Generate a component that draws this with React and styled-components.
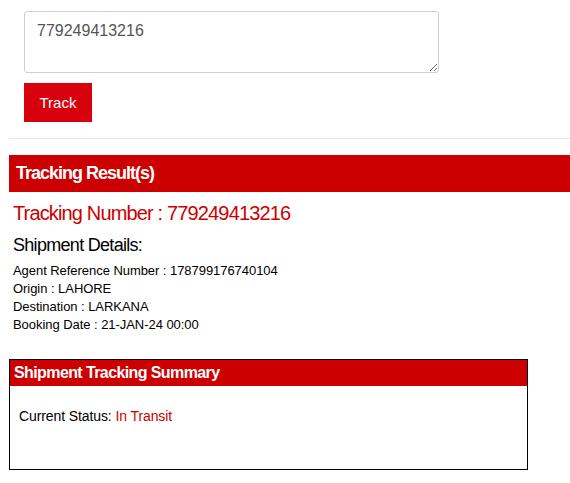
import React from 'react';
import styled, { createGlobalStyle } from 'styled-components';

const GlobalStyles = createGlobalStyle`
  html, body {
    margin: 0;
    padding: 0;
    background: #fff;
  }

  body {
    font-family: "Liberation Sans", Arial, Helvetica, sans-serif;
    color: #000;
  }
`;

const Page = styled.div`
  padding: 11px 0 0 9px;
`;

const SearchForm = styled.form`
  display: flex;
  flex-direction: column;
  align-items: flex-start;
  gap: 10px;
  padding-left: 15px;
  padding-bottom: 16px;
  border-bottom: 1px solid #e6e6e6;
`;

const NumberInput = styled.textarea`
  box-sizing: border-box;
  width: 415px;
  height: 62px;
  padding: 9px 12px;
  border: 1px solid #ccd0d6;
  border-radius: 3px;
  font-family: inherit;
  font-size: 16px;
  line-height: 20px;
  color: #555;
  resize: vertical;
  outline: none;
`;

const TrackButton = styled.button.attrs({
  type: 'button'
})`
  width: 68px;
  height: 39px;
  border: 0;
  background: #d9000d;
  color: #fff;
  font-family: inherit;
  font-size: 15px;
  cursor: pointer;
`;

const Banner = styled.h2`
  margin: 16px 0 0;
  height: 37px;
  display: flex;
  align-items: center;
  padding-left: 7px;
  background: #cc0000;
  color: #fff;
  font-size: 18px;
  font-weight: bold;
  letter-spacing: -1px;
`;

const Details = styled.div`
  padding-left: 4px;
`;

const TrackingNumber = styled.h3`
  margin: 9px 0 0;
  font-size: 20px;
  font-weight: normal;
  line-height: 24px;
  letter-spacing: -0.85px;
  color: #cc0000;
`;

const SubHeading = styled.h4`
  margin: 9px 0 0;
  font-size: 18px;
  font-weight: normal;
  line-height: 22px;
  letter-spacing: -0.7px;
`;

const InfoList = styled.div`
  margin-top: 6px;
  font-size: 13px;
  line-height: 18px;
  letter-spacing: -0.05px;
`;

const SummaryBox = styled.section`
  box-sizing: border-box;
  width: 519px;
  height: 111px;
  margin-top: 25px;
  border: 1px solid #000;
`;

const SummaryHeader = styled.div`
  height: 26px;
  display: flex;
  align-items: center;
  padding-left: 4px;
  background: #cc0000;
  color: #fff;
  font-size: 16px;
  font-weight: bold;
  letter-spacing: -0.6px;
`;

const SummaryBody = styled.div`
  padding: 21px 9px;
  font-size: 14px;
  line-height: 18px;
  letter-spacing: -0.1px;
`;

const Status = styled.span`
  color: ${props => props.color || '#cc0000'};
`;

const info = [
  ['Agent Reference Number', '178799176740104'],
  ['Origin', 'LAHORE'],
  ['Destination', 'LARKANA'],
  ['Booking Date', '21-JAN-24 00:00']
];

export default function App() {
  return (
    <Page>
      <GlobalStyles />

      <SearchForm>
        <NumberInput defaultValue="779249413216" />
        <TrackButton>Track</TrackButton>
      </SearchForm>

      <Banner>Tracking Result(s)</Banner>

      <Details>
        <TrackingNumber>Tracking Number : 779249413216</TrackingNumber>
        <SubHeading>Shipment Details:</SubHeading>
        <InfoList>
          {info.map(([label, value]) => (
            <div key={label}>{label} : {value}</div>
          ))}
        </InfoList>
      </Details>

      <SummaryBox>
        <SummaryHeader>Shipment Tracking Summary</SummaryHeader>
        <SummaryBody>
          Current Status: <Status>In Transit</Status>
        </SummaryBody>
      </SummaryBox>
    </Page>
  );
}
